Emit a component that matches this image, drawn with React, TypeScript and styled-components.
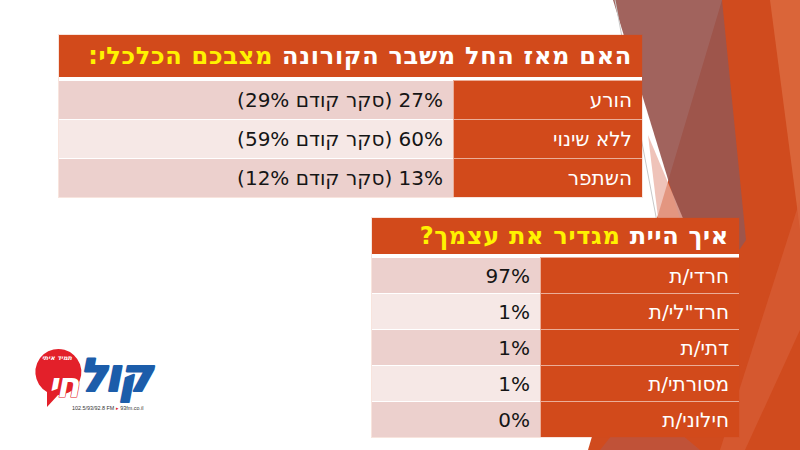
import { FC, Fragment } from 'react';
import styled, { createGlobalStyle } from 'styled-components';

const Global = createGlobalStyle`
  html, body { margin: 0; padding: 0; }
  body { width: 800px; height: 450px; overflow: hidden; background: #fff; }
`

const ORANGE = '#D24A1B'

const Slide = styled.div`
  position: relative;
  width: 800px;
  height: 450px;
  box-sizing: border-box;
  padding-top: 35px;
  overflow: hidden;
  background: #fff;
  font-family: "DejaVu Sans", "Liberation Sans", sans-serif;
  display: flex;
  flex-direction: column;
`

const Backdrop = styled.svg`
  position: absolute;
  inset: 0;
  z-index: 0;
`

const TopRow = styled.div`
  position: relative;
  z-index: 1;
  padding-left: 59px;
`

const BottomRow = styled.div`
  position: relative;
  z-index: 1;
  display: flex;
  align-items: flex-end;
  justify-content: space-between;
  margin-top: 21px;
  padding: 0 61px 0 28px;
`

const Table = styled.div<{ $width: number; $label: number }>`
  direction: rtl;
  width: ${p => p.$width}px;
  display: grid;
  grid-template-columns: ${p => p.$label}px 1fr;
  background: #fff;
  box-shadow: 0 0 0 1px rgba(210, 74, 27, 0.15);
`

const Header = styled.div<{ $h: number }>`
  grid-column: 1 / -1;
  box-sizing: border-box;
  height: ${p => p.$h + 3}px;
  border-bottom: 3px solid #fff;
  background: ${ORANGE};
  color: #fff;
  display: flex;
  align-items: center;
  padding: 0 10px;
  font-size: 24px;
  font-weight: 700;
  letter-spacing: 0.7px;
  white-space: nowrap;
`

const Hi = styled.span`
  color: #FFF200;
`

const Label = styled.div<{ $h: number }>`
  box-sizing: border-box;
  height: ${p => p.$h}px;
  background: ${ORANGE};
  color: #fff;
  display: flex;
  align-items: center;
  padding-right: 10px;
  font-size: 20px;
  border-top: 1px solid rgba(255, 255, 255, 0.55);
  border-left: 1px solid rgba(255, 255, 255, 0.55);
`

const Value = styled.div<{ $h: number; $light: boolean }>`
  box-sizing: border-box;
  height: ${p => p.$h}px;
  background: ${p => (p.$light ? '#F6E8E6' : '#ECD0CD')};
  color: #151515;
  display: flex;
  align-items: center;
  padding-right: 10px;
  font-size: 20px;
  border-top: 1px solid #fff;
`

const LogoBox = styled.svg`
  display: block;
  width: 132px;
  height: 80px;
  margin-bottom: 22px;
  overflow: visible;
`

type Row = { label: string; value: string }

const economy: Row[] = [
  { label: 'הורע', value: '27% (סקר קודם 29%)' },
  { label: 'ללא שינוי', value: '60% (סקר קודם 59%)' },
  { label: 'השתפר', value: '13% (סקר קודם 12%)' },
]

const identity: Row[] = [
  { label: 'חרדי/ת', value: '97%' },
  { label: 'חרד"לי/ת', value: '1%' },
  { label: 'דתי/ת', value: '1%' },
  { label: 'מסורתי/ת', value: '1%' },
  { label: 'חילוני/ת', value: '0%' },
]

const Background: FC = () => (
  <Backdrop width="800" height="450" viewBox="0 0 800 450">
    <polygon points="588,450 722,0 800,0 800,450" fill="#D04B1E" />
    <polygon points="770,0 800,0 800,230" fill="#DC6B40" opacity="0.8" />
    <polygon points="800,200 800,330 745,450 720,450" fill="#D9603A" opacity="0.6" />
    <polygon points="600,450 640,400 700,450" fill="#B5574A" opacity="0.6" />
    <polygon points="613,0 722,0 746,240 705,300" fill="#99564F" opacity="0.92" />
    <polygon points="648,135 690,235 702,300 668,300" fill="#E9AFA2" opacity="0.75" />
    <line x1="615" y1="0" x2="668" y2="280" stroke="#C8C8C8" strokeWidth="1" />
  </Backdrop>
)

const Logo: FC = () => (
  <LogoBox viewBox="0 0 132 80">
    <path d="M19 57 A23 23 0 1 1 30 60 L19 72 Z" fill="#E3202A" />
    <text x="29" y="25" fontSize="6.5" fontWeight="700" fontStyle="italic" fill="#fff" textAnchor="middle"
      fontFamily='"DejaVu Sans", sans-serif' direction="rtl">תמיד איתי</text>
    <text x="35" y="62" fontSize="34" fontWeight="900" fontStyle="italic" fill="#fff" stroke="#E3202A" strokeWidth="1.2"
      paintOrder="stroke" textAnchor="middle" fontFamily='"DejaVu Sans", sans-serif' direction="rtl" letterSpacing="-2">חי</text>
    <text x="87" y="56" fontSize="46" fontWeight="900" fontStyle="italic" fill="#1C5DAA" stroke="#1C5DAA" strokeWidth="2.2"
      strokeLinejoin="round" textAnchor="middle" fontFamily='"DejaVu Sans", sans-serif' direction="rtl" letterSpacing="-2">קול</text>
    <text x="44" y="75" fontSize="5.4" fill="#333" fontFamily='"Liberation Sans", sans-serif'>
      102.5/93/92.8 FM <tspan fill="#E3202A">▸</tspan> 93fm.co.il
    </text>
  </LogoBox>
)

const DataTable: FC<{ width: number; label: number; head: number; row: number; rows: Row[]; title: string; mark: string }> =
  ({ width, label, head, row, rows, title, mark }) => (
    <Table $width={width} $label={label}>
      <Header $h={head}>
        {title}&nbsp;<Hi>{mark}</Hi>
      </Header>
      {rows.map((r, i) => (
        <Fragment key={r.label}>
          <Label $h={row}>{r.label}</Label>
          <Value $h={row} $light={i % 2 === 1}>{r.value}</Value>
        </Fragment>
      ))}
    </Table>
  )

export default function App() {
  return (
    <>
      <Global />
      <Slide>
        <Background />
        <TopRow>
          <DataTable width={583} label={189} head={42} row={39} rows={economy}
            title="האם מאז החל משבר הקורונה" mark="מצבכם הכלכלי:" />
        </TopRow>
        <BottomRow>
          <Logo />
          <DataTable width={367} label={199} head={36} row={36} rows={identity}
            title="איך היית" mark="מגדיר את עצמך?" />
        </BottomRow>
      </Slide>
    </>
  )
}
